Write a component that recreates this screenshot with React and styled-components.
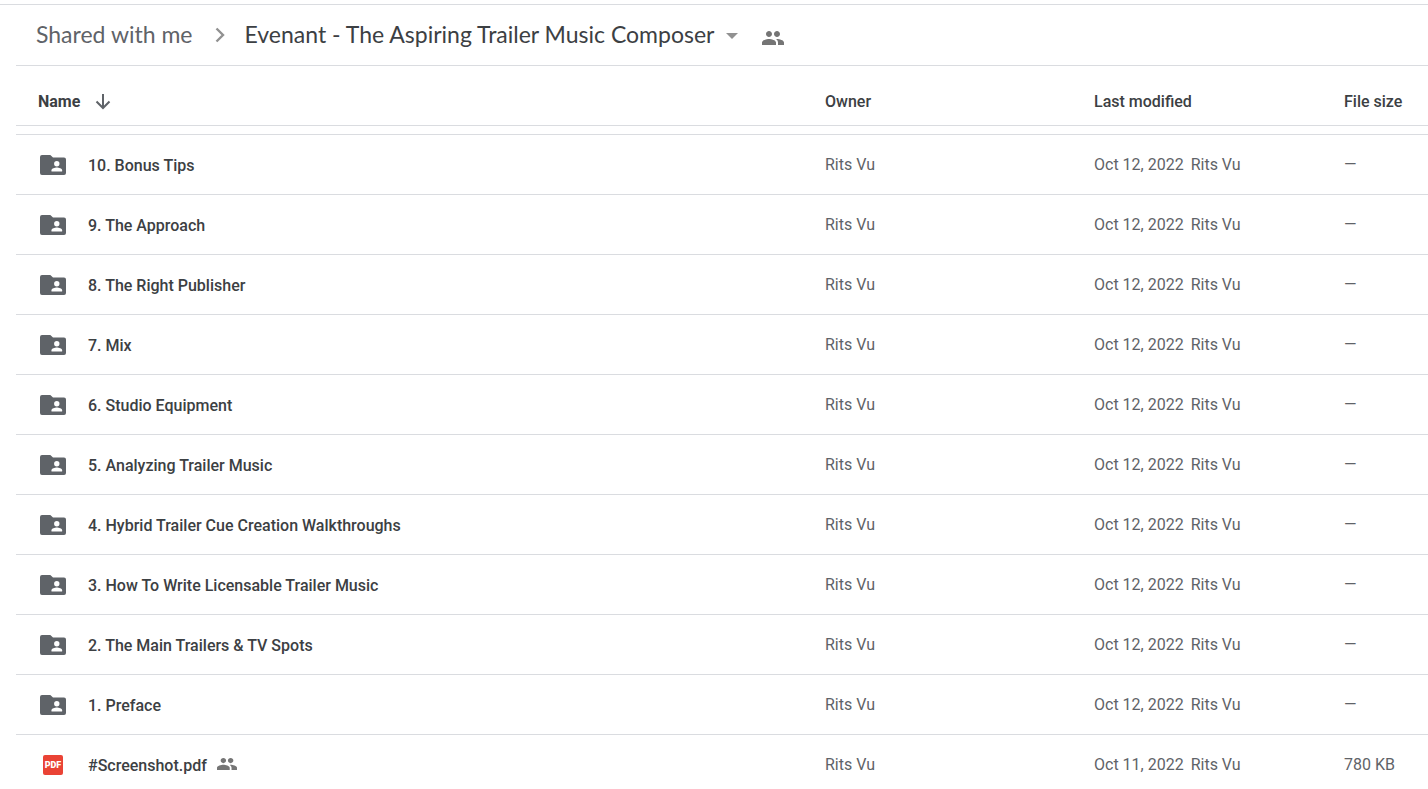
import React from "react";
import styled, { createGlobalStyle } from "styled-components";

const folders = [
  "10. Bonus Tips",
  "9. The Approach",
  "8. The Right Publisher",
  "7. Mix",
  "6. Studio Equipment",
  "5. Analyzing Trailer Music",
  "4. Hybrid Trailer Cue Creation Walkthroughs",
  "3. How To Write Licensable Trailer Music",
  "2. The Main Trailers & TV Spots",
  "1. Preface",
];

const files = [
  ...folders.map((name) => ({ name, type: "folder", modified: "Oct 12, 2022", size: "—" })),
  { name: "#Screenshot.pdf", type: "pdf", modified: "Oct 11, 2022", size: "780 KB", shared: true },
];

const PeopleIcon = ({ width, height }) => (
  <svg width={width} height={height} viewBox="1 5 22 14" preserveAspectRatio="none" fill="currentColor" aria-label="Shared">
    <path d="M16 11c1.660 0 2.990-1.340 2.990-3S17.660 5 16 5c-1.660 0-3 1.340-3 3s1.340 3 3 3zm-8 0c1.660 0 2.990-1.340 2.990-3S9.660 5 8 5C6.340 5 5 6.340 5 8s1.340 3 3 3zm0 2c-2.330 0-7 1.170-7 3.500V19h14v-2.500c0-2.330-4.670-3.500-7-3.500zm8 0c-.29 0-.62.020-.97.050 1.160.84 1.970 1.970 1.970 3.450V19h6v-2.500c0-2.330-4.670-3.500-7-3.500z" />
  </svg>
);

const FolderIcon = () => (
  <svg width="26" height="20" viewBox="0 0 26 20" fill="#5f6368" aria-hidden="true">
    <path d="M2 0h8.300L13 2.500h11A2 2 0 0 1 26 4.500v13.500a2 2 0 0 1-2 2h-22A2 2 0 0 1 0 18v-16A2 2 0 0 1 2 0z" />
    <circle cx="16.800" cy="8.700" r="2.700" fill="#fff" />
    <path d="M11.500 16.500v-1.300c0-1.800 3.400-2.700 5.300-2.700s5.300.9 5.300 2.700v1.300z" fill="#fff" />
  </svg>
);

function FileRow({ file }) {
  return (
    <tr>
      <NameCell>
        <FileName>
          <IconBox>{file.type === "folder" ? <FolderIcon /> : <PdfBadge>PDF</PdfBadge>}</IconBox>
          <Title>{file.name}</Title>
          {file.shared && (
            <SharedMark>
              <PeopleIcon width="20" height="12" />
            </SharedMark>
          )}
        </FileName>
      </NameCell>
      <Cell>Rits Vu</Cell>
      <Cell>
        <Modified>
          <span>{file.modified}</span>
          <span>Rits Vu</span>
        </Modified>
      </Cell>
      <Cell>{file.size}</Cell>
    </tr>
  );
}

function App() {
  return (
    <Page>
      <GlobalStyle />
      <Breadcrumbs aria-label="Folder path">
        <Crumb href="#shared">Shared with me</Crumb>
        <Chevron width="10" height="16" viewBox="0 0 10 16" aria-hidden="true">
          <path d="M1.500 1.500L8 8l-6.500 6.500" fill="none" stroke="#919191" strokeWidth="2.400" />
        </Chevron>
        <CurrentFolder type="button">
          Evenant - The Aspiring Trailer Music Composer
          <Caret width="12" height="6" viewBox="0 0 12 6" aria-hidden="true">
            <path d="M0 0h12L6 6z" fill="#919191" />
          </Caret>
        </CurrentFolder>
        <ShareButton type="button" aria-label="Manage sharing">
          <PeopleIcon width="22" height="14" />
        </ShareButton>
      </Breadcrumbs>

      <FileTable>
        <colgroup>
          <col />
          <Column $width={269} />
          <Column $width={250} />
          <Column $width={84} />
        </colgroup>
        <thead>
          <tr>
            <HeadCell $first aria-sort="descending">
              <SortButton type="button">
                Name
                <svg width="16" height="16" viewBox="0 0 16 16" aria-hidden="true">
                  <path d="M8 0v14M1.500 7.500L8 14l6.500-6.500" fill="none" stroke="#5f6368" strokeWidth="2" />
                </svg>
              </SortButton>
            </HeadCell>
            <HeadCell>Owner</HeadCell>
            <HeadCell>Last modified</HeadCell>
            <HeadCell>File size</HeadCell>
          </tr>
        </thead>
        <FileList>
          {files.map((file) => (
            <FileRow file={file} key={file.name} />
          ))}
        </FileList>
      </FileTable>
    </Page>
  );
}

export default App;

const GlobalStyle = createGlobalStyle`
  body {
    margin: 0;
    background: #fff;
    color: #3c4043;
    font-family: Roboto, "Liberation Sans", sans-serif;
    font-size: 16px;
  }
  button {
    padding: 0;
    border: 0;
    background: none;
    color: inherit;
    font: inherit;
    cursor: pointer;
  }
  svg {
    display: block;
    flex-shrink: 0;
  }
`;

const Page = styled.main`
  margin-top: 4px;
  border-top: 1px solid #dadce0;
  padding-left: 16px;
`;

const Breadcrumbs = styled.nav`
  box-sizing: border-box;
  display: flex;
  align-items: center;
  height: 61px;
  padding: 0 0 2px 20px;
  border-bottom: 1px solid #dadce0;
  font-family: Lato, "Open Sans", sans-serif;
  font-size: 23px;
  line-height: 28px;
  white-space: nowrap;
`;

const Crumb = styled.a`
  color: #5f6368;
  text-decoration: none;
`;

const Chevron = styled.svg`
  margin: 2px 20px 0 22px;
`;

const CurrentFolder = styled.button`
  display: flex;
  align-items: center;
  gap: 12px;
`;

const Caret = styled.svg`
  margin-top: 4px;
`;

const ShareButton = styled.button`
  margin: 8px 0 0 24px;
  color: #757575;
`;

const FileTable = styled.table`
  width: 100%;
  table-layout: fixed;
  border-collapse: separate;
  border-spacing: 0;
  line-height: 20px;
  white-space: nowrap;
`;

const Column = styled.col`
  width: ${({ $width }) => $width}px;
`;

const HeadCell = styled.th`
  box-sizing: border-box;
  height: 60px;
  padding: 12px 0 0 ${({ $first }) => ($first ? "22px" : "0")};
  border-bottom: 1px solid #dadce0;
  font-weight: 500;
  text-align: left;
`;

const SortButton = styled.button`
  display: flex;
  align-items: center;
  gap: 15px;
  font-weight: 700;
`;

const FileList = styled.tbody`
  &::before {
    content: "";
    display: block;
    height: 8px;
  }
  td {
    border-top: 1px solid #dadce0;
  }
`;

const Cell = styled.td`
  box-sizing: border-box;
  height: 60px;
  padding: 0;
  color: #5f6368;
`;

const NameCell = styled(Cell)`
  padding-left: 22px;
  color: #3c4043;
  font-weight: 500;
`;

const FileName = styled.div`
  display: flex;
  align-items: center;
`;

const IconBox = styled.span`
  display: flex;
  justify-content: center;
  width: 30px;
  margin-right: 20px;
`;

const Title = styled.span`
  padding-top: 2px;
`;

const PdfBadge = styled.span`
  width: 20px;
  border-radius: 2px;
  background: #ea4335;
  color: #fff;
  font-size: 9px;
  font-weight: 900;
  line-height: 20px;
  text-align: center;
`;

const SharedMark = styled.span`
  margin: 0 0 2px 10px;
  color: #757575;
`;

const Modified = styled.span`
  display: flex;
  gap: 7px;
`;
